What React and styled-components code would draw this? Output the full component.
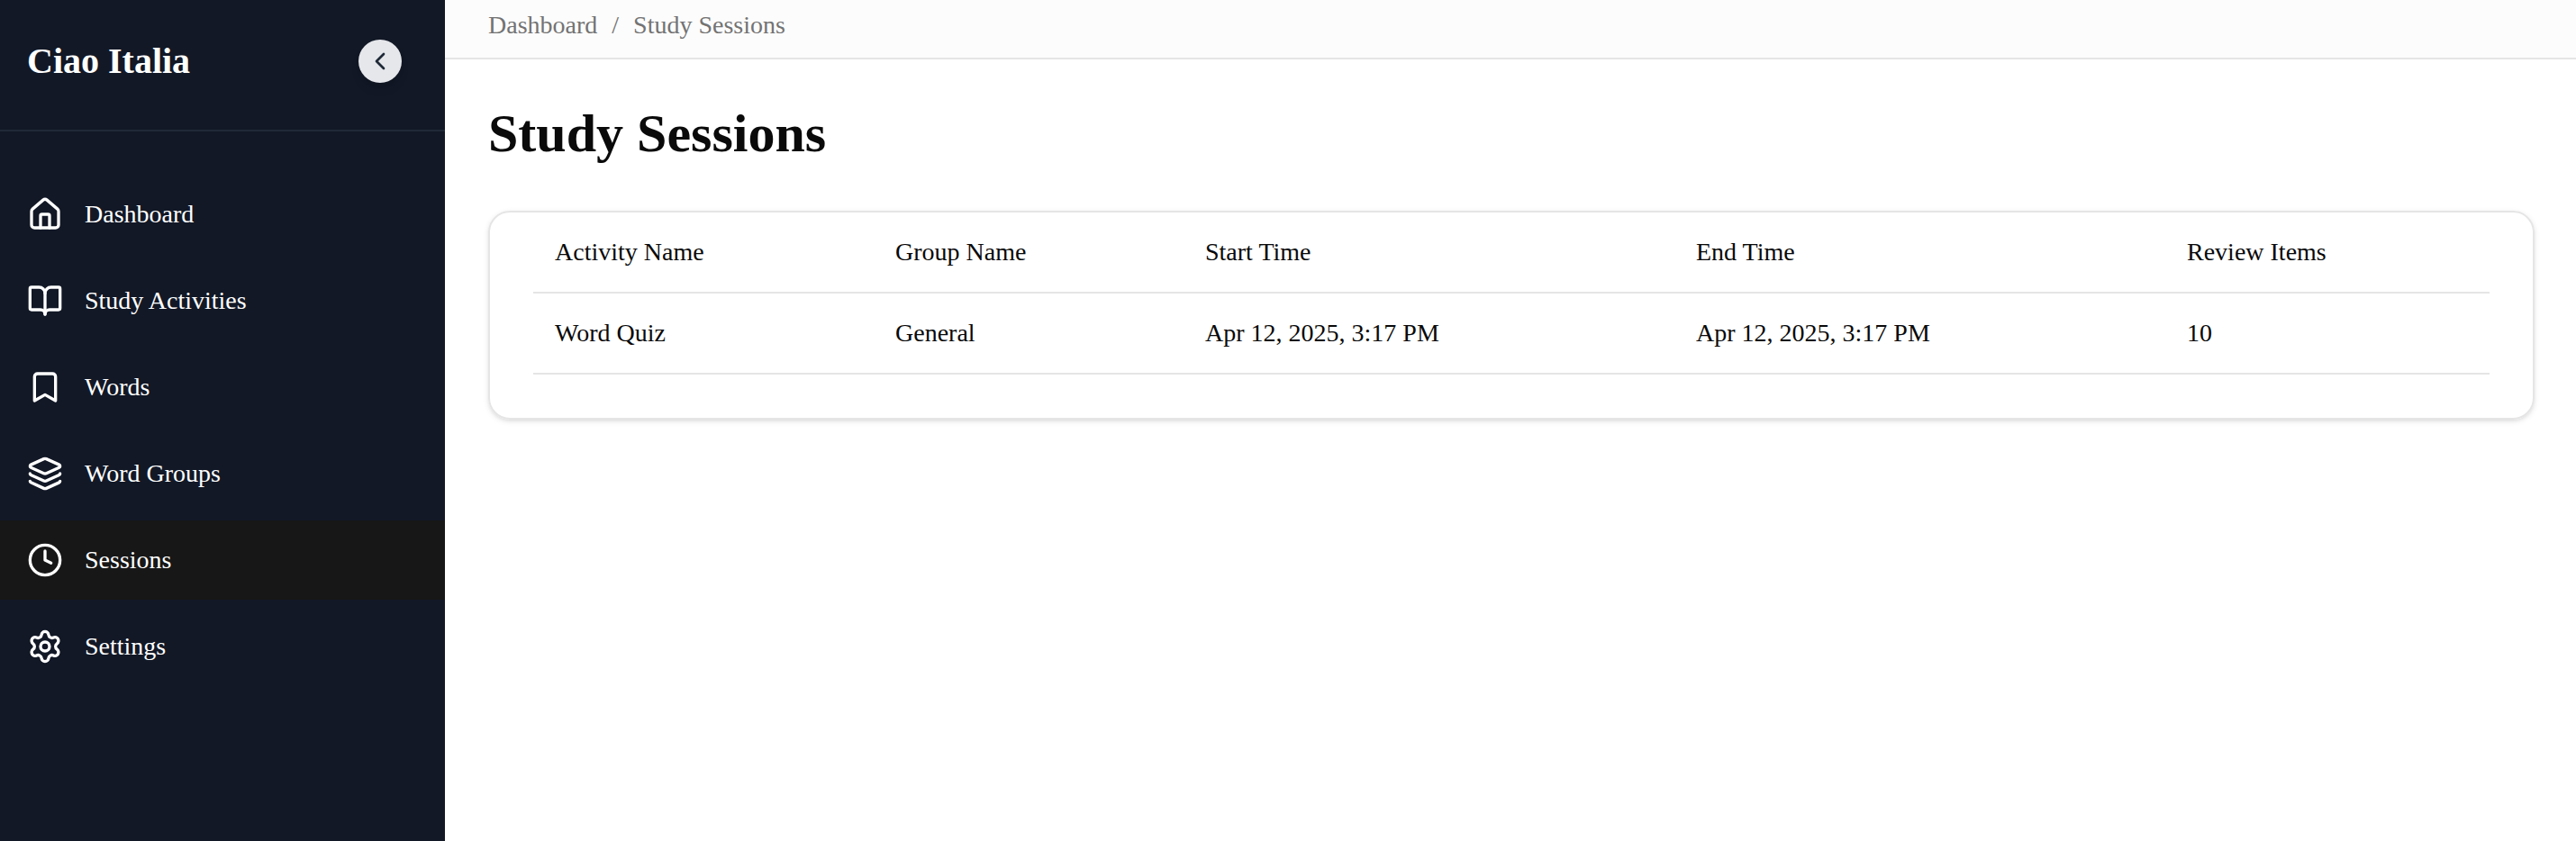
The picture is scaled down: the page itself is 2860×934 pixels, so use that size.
import React from "react";
import styled, { createGlobalStyle } from "styled-components";
import { House, BookOpen, Bookmark, Layers, Clock, Settings, ChevronLeft } from "lucide-react";

const GlobalStyle = createGlobalStyle`
  *, *::before, *::after { box-sizing: border-box; }
  body {
    margin: 0;
    background: #fff;
    color: #0a0a0a;
    font-family: "Liberation Serif", "Times New Roman", serif;
    font-size: 28px;
    line-height: 39px;
    -webkit-font-smoothing: antialiased;
  }
`;

const Layout = styled.div`
  display: flex;
  height: 934px;
  overflow: hidden;
`;

const Sidebar = styled.aside`
  flex: none;
  width: 494px;
  background: #121826;
  color: #fff;
`;

const SidebarHeader = styled.div`
  display: flex;
  align-items: center;
  justify-content: space-between;
  height: 146px;
  padding: 0 48px 8px 30px;
  border-bottom: 2px solid #1f2937;
`;

const Brand = styled.div`
  padding-bottom: 1px;
  font-size: 40px;
  font-weight: 700;
  line-height: 55px;
`;

const CollapseButton = styled.button`
  display: flex;
  align-items: center;
  justify-content: center;
  width: 48px;
  height: 48px;
  padding: 0;
  border: 0;
  border-radius: 50%;
  background: #e5e7eb;
  color: #1f2937;
  box-shadow: 0 8px 12px -2px rgba(0, 0, 0, 0.1), 0 4px 8px -4px rgba(0, 0, 0, 0.1);
`;

const Nav = styled.nav`
  display: flex;
  flex-direction: column;
  gap: 8px;
  padding-top: 48px;
`;

const NavItem = styled.a`
  display: flex;
  align-items: center;
  gap: 24px;
  height: 88px;
  padding: 0 30px;
  background: ${(p) => (p.$active ? "#171717" : "transparent")};
`;

const NavLabel = styled.div`
  padding-bottom: 1px;
`;

const Main = styled.main`
  flex: 1;
  min-width: 0;
`;

const Breadcrumb = styled.div`
  display: flex;
  gap: 16px;
  height: 66px;
  padding: 8px 48px 0;
  border-bottom: 2px solid #e5e5e5;
  background: #fcfcfc;
  color: #737373;
`;

const Content = styled.div`
  padding: 48px 46px 0 48px;
`;

const Title = styled.h1`
  margin: 0 0 51px;
  font-size: 60px;
  font-weight: 700;
  line-height: 69px;
`;

const Card = styled.section`
  height: 232px;
  padding: 0 48px;
  border: 2px solid #e5e5e5;
  border-radius: 24px;
  box-shadow: 0 2px 6px rgba(0, 0, 0, 0.1), 0 2px 4px -2px rgba(0, 0, 0, 0.1);
`;

const Row = styled.div`
  display: grid;
  grid-template-columns: 378px 344px 545px 545px 1fr;
  height: 90px;
  padding: 24px 24px 0;
  border-bottom: 2px solid #e5e5e5;
`;

const navItems = [
  { label: "Dashboard", icon: House },
  { label: "Study Activities", icon: BookOpen },
  { label: "Words", icon: Bookmark },
  { label: "Word Groups", icon: Layers },
  { label: "Sessions", icon: Clock, active: true },
  { label: "Settings", icon: Settings },
];

const rows = [
  ["Activity Name", "Group Name", "Start Time", "End Time", "Review Items"],
  ["Word Quiz", "General", "Apr 12, 2025, 3:17 PM", "Apr 12, 2025, 3:17 PM", "10"],
];

export default function App() {
  return (
    <Layout>
      <GlobalStyle />
      <Sidebar>
        <SidebarHeader>
          <Brand>Ciao Italia</Brand>
          <CollapseButton aria-label="Collapse sidebar">
            <ChevronLeft size={32} strokeWidth={2} />
          </CollapseButton>
        </SidebarHeader>
        <Nav>
          {navItems.map(({ label, icon: Icon, active }) => (
            <NavItem key={label} $active={active}>
              <Icon size={40} strokeWidth={2} />
              <NavLabel>{label}</NavLabel>
            </NavItem>
          ))}
        </Nav>
      </Sidebar>
      <Main>
        <Breadcrumb>
          <span>Dashboard</span>
          <span>/</span>
          <span>Study Sessions</span>
        </Breadcrumb>
        <Content>
          <Title>Study Sessions</Title>
          <Card>
            {rows.map((cells) => (
              <Row key={cells[0]}>
                {cells.map((cell, i) => (
                  <span key={i}>{cell}</span>
                ))}
              </Row>
            ))}
          </Card>
        </Content>
      </Main>
    </Layout>
  );
}
